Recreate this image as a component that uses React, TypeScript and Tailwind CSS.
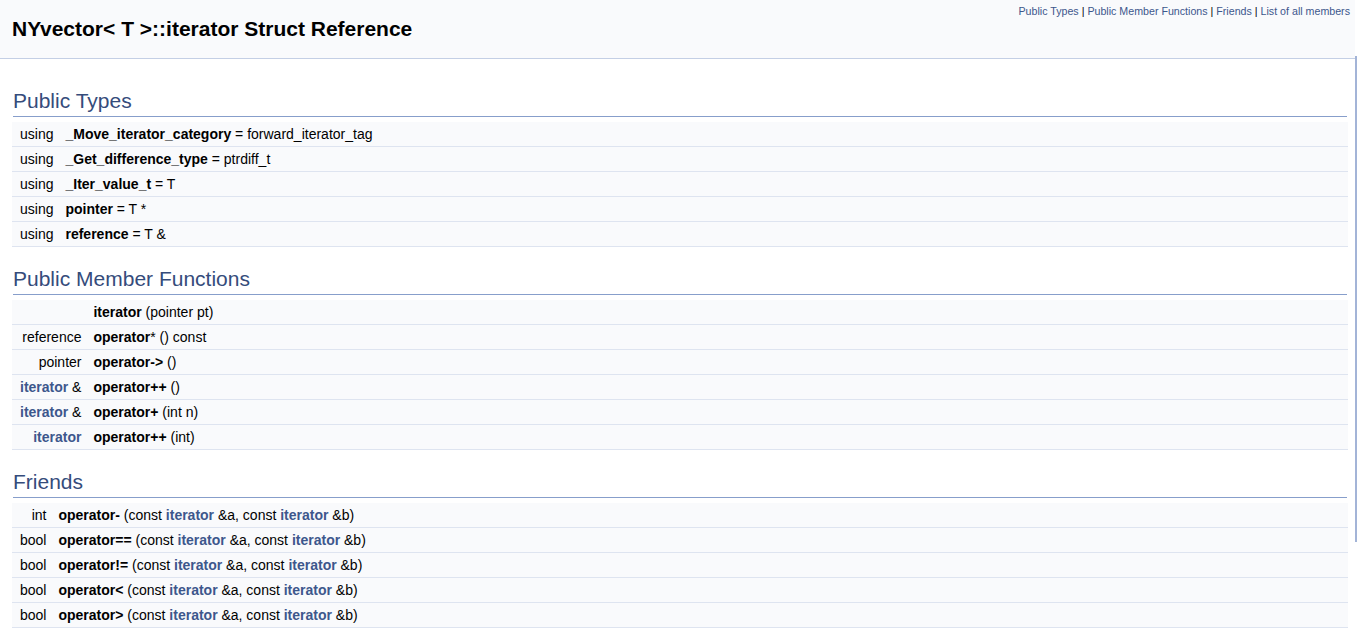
import React from 'react';

type Row = { left: React.ReactNode; right: React.ReactNode };

const Link = ({ children }: { children: React.ReactNode }) => (
  <span className="font-bold text-[#3D578C]">{children}</span>
);

const B = ({ children }: { children: React.ReactNode }) => <span className="font-bold">{children}</span>;

const publicTypes: Row[] = [
  { left: 'using', right: <><B>_Move_iterator_category</B> = forward_iterator_tag</> },
  { left: 'using', right: <><B>_Get_difference_type</B> = ptrdiff_t</> },
  { left: 'using', right: <><B>_Iter_value_t</B> = T</> },
  { left: 'using', right: <><B>pointer</B> = T *</> },
  { left: 'using', right: <><B>reference</B> = T &amp;</> },
];

const memberFunctions: Row[] = [
  { left: '', right: <><B>iterator</B> (pointer pt)</> },
  { left: 'reference', right: <><B>operator</B>* () const</> },
  { left: 'pointer', right: <><B>operator-&gt;</B> ()</> },
  { left: <><Link>iterator</Link> &amp;</>, right: <><B>operator++</B> ()</> },
  { left: <><Link>iterator</Link> &amp;</>, right: <><B>operator+</B> (int n)</> },
  { left: <Link>iterator</Link>, right: <><B>operator++</B> (int)</> },
];

const args = (
  <>
    (const <Link>iterator</Link> &amp;a, const <Link>iterator</Link> &amp;b)
  </>
);

const friends: Row[] = [
  { left: 'int', right: <><B>operator-</B> {args}</> },
  { left: 'bool', right: <><B>operator==</B> {args}</> },
  { left: 'bool', right: <><B>operator!=</B> {args}</> },
  { left: 'bool', right: <><B>operator&lt;</B> {args}</> },
  { left: 'bool', right: <><B>operator&gt;</B> {args}</> },
];

function Section({ title, rows }: { title: string; rows: Row[] }) {
  return (
    <div>
      <h2 className="mx-px mt-5 border-b border-[#879ECB] pb-[3px] text-[21px] font-normal leading-[24px] text-[#354C7B]">
        {title}
      </h2>
      <table className="mt-[5px] w-full border-separate border-spacing-0">
        <tbody>
          {rows.map((r, i) => (
            <tr key={i} className="bg-[#F9FAFC]">
              <td className="h-[25px] whitespace-nowrap border-b border-[#DEE4F0] pl-2 pr-[6px] text-right align-middle leading-[16px]">
                {r.left}
              </td>
              <td className="h-[25px] w-full whitespace-nowrap border-b border-[#DEE4F0] pl-[6px] align-middle leading-[16px]">
                {r.right}
              </td>
            </tr>
          ))}
        </tbody>
      </table>
    </div>
  );
}

export default function App() {
  return (
    <div className="flex min-h-screen bg-white font-['Liberation_Sans',Arial,sans-serif] text-[14px] text-black">
      <div className="flex-1">
        {/* Header */}
        <div className="flex items-start justify-between border-b border-[#C4CFE5] bg-[#F9FAFC]">
          <div className="py-[5px] pl-[10px] pr-[5px]">
            <div className="mx-[2px] my-[10px] text-[21px] font-bold leading-[28px]">
              NYvector&lt; T &gt;::iterator Struct Reference
            </div>
          </div>
          <div className="pr-[5px] pt-1 text-[10.67px] leading-[14px]">
            <span className="text-[#3D578C]">Public Types</span> |{' '}
            <span className="text-[#3D578C]">Public Member Functions</span> |{' '}
            <span className="text-[#3D578C]">Friends</span> |{' '}
            <span className="text-[#3D578C]">List of all members</span>
          </div>
        </div>

        {/* Contents */}
        <div className="pl-3 pr-[7px] pt-[10px]">
          <Section title="Public Types" rows={publicTypes} />
          <Section title="Public Member Functions" rows={memberFunctions} />
          <Section title="Friends" rows={friends} />
        </div>
      </div>

      {/* scroll thumb */}
      <div className="w-[2px]">
        <div className="mt-[56px] h-[486px] bg-[#A3B4D7]" />
      </div>
    </div>
  );
}
